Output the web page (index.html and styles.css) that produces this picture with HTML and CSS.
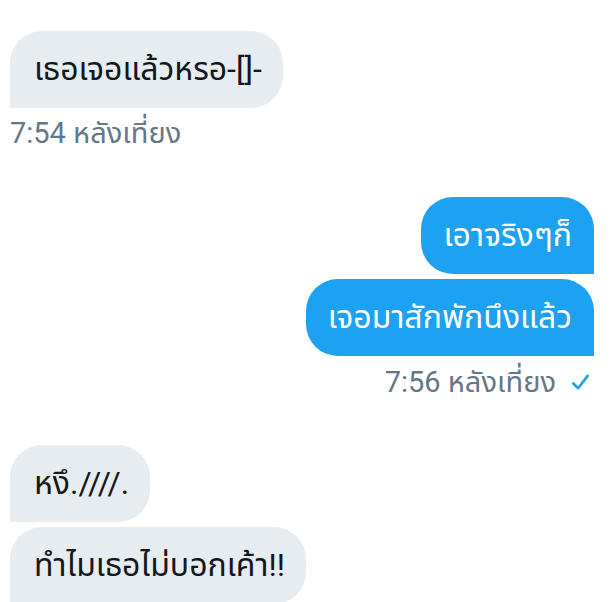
FILE: index.html
```html
<!DOCTYPE html>
<html lang="th">
<head>
<meta charset="utf-8">
<link rel="stylesheet" href="styles.css">
</head>
<body>
<main class="thread">
  <section class="group group-in first">
    <div class="bubble in single">เธอเจอแล้วหรอ-[]-</div>
    <div class="meta">7:54 หลังเที่ยง</div>
  </section>
  <section class="group group-out">
    <div class="bubble out top">เอาจริงๆก็</div>
    <div class="bubble out bottom">เจอมาสักพักนึงแล้ว</div>
    <div class="meta meta-out">7:56 หลังเที่ยง
      <svg class="check" viewBox="0 0 20 20" width="19" height="19" aria-hidden="true"><path d="M2.5 11 L7.5 16 L17.5 3" fill="none" stroke="#1da1f2" stroke-width="2.8" stroke-linecap="round" stroke-linejoin="round"/></svg>
    </div>
  </section>
  <section class="group group-in">
    <div class="bubble in top">หงึ.////.</div>
    <div class="bubble in bottom">ทำไมเธอไม่บอกเค้า!!</div>
  </section>
</main>
</body>
</html>
```

FILE: styles.css
```css
html, body {
  margin: 0;
  padding: 0;
  background: #ffffff;
}
body {
  width: 616px;
  height: 602px;
  overflow: hidden;
  font-family: Roboto, "Noto Sans Thai", "Noto Sans", sans-serif;
}
.thread {
  display: flex;
  flex-direction: column;
  padding: 31px 22px 0 10px;
}
.group {
  display: flex;
  flex-direction: column;
  gap: 5px;
}
.group-in { align-items: flex-start; }
.group-out { align-items: flex-end; margin-top: 44px; }
.group-out + .group-in { margin-top: 43px; }
.bubble {
  font-size: 32px;
  line-height: 43px;
  padding: 17px 22px;
  border-radius: 32px;
  color: #14171a;
  white-space: nowrap;
}
.bubble.in { background: #e6ecf0; padding-left: 24px; padding-right: 21px; }
.bubble.out { background: #1da1f2; color: #ffffff; }
.bubble.in.single, .bubble.in.top, .bubble.in.bottom { border-bottom-left-radius: 0; }
.bubble.out.top, .bubble.out.bottom { border-bottom-right-radius: 0; }
.meta {
  font-size: 29px;
  line-height: 40px;
  color: #657786;
  display: flex;
  align-items: center;
  gap: 15px;
}
.meta-out { margin-top: 1px; padding-right: 4px; }
.check { display: block; }
```
